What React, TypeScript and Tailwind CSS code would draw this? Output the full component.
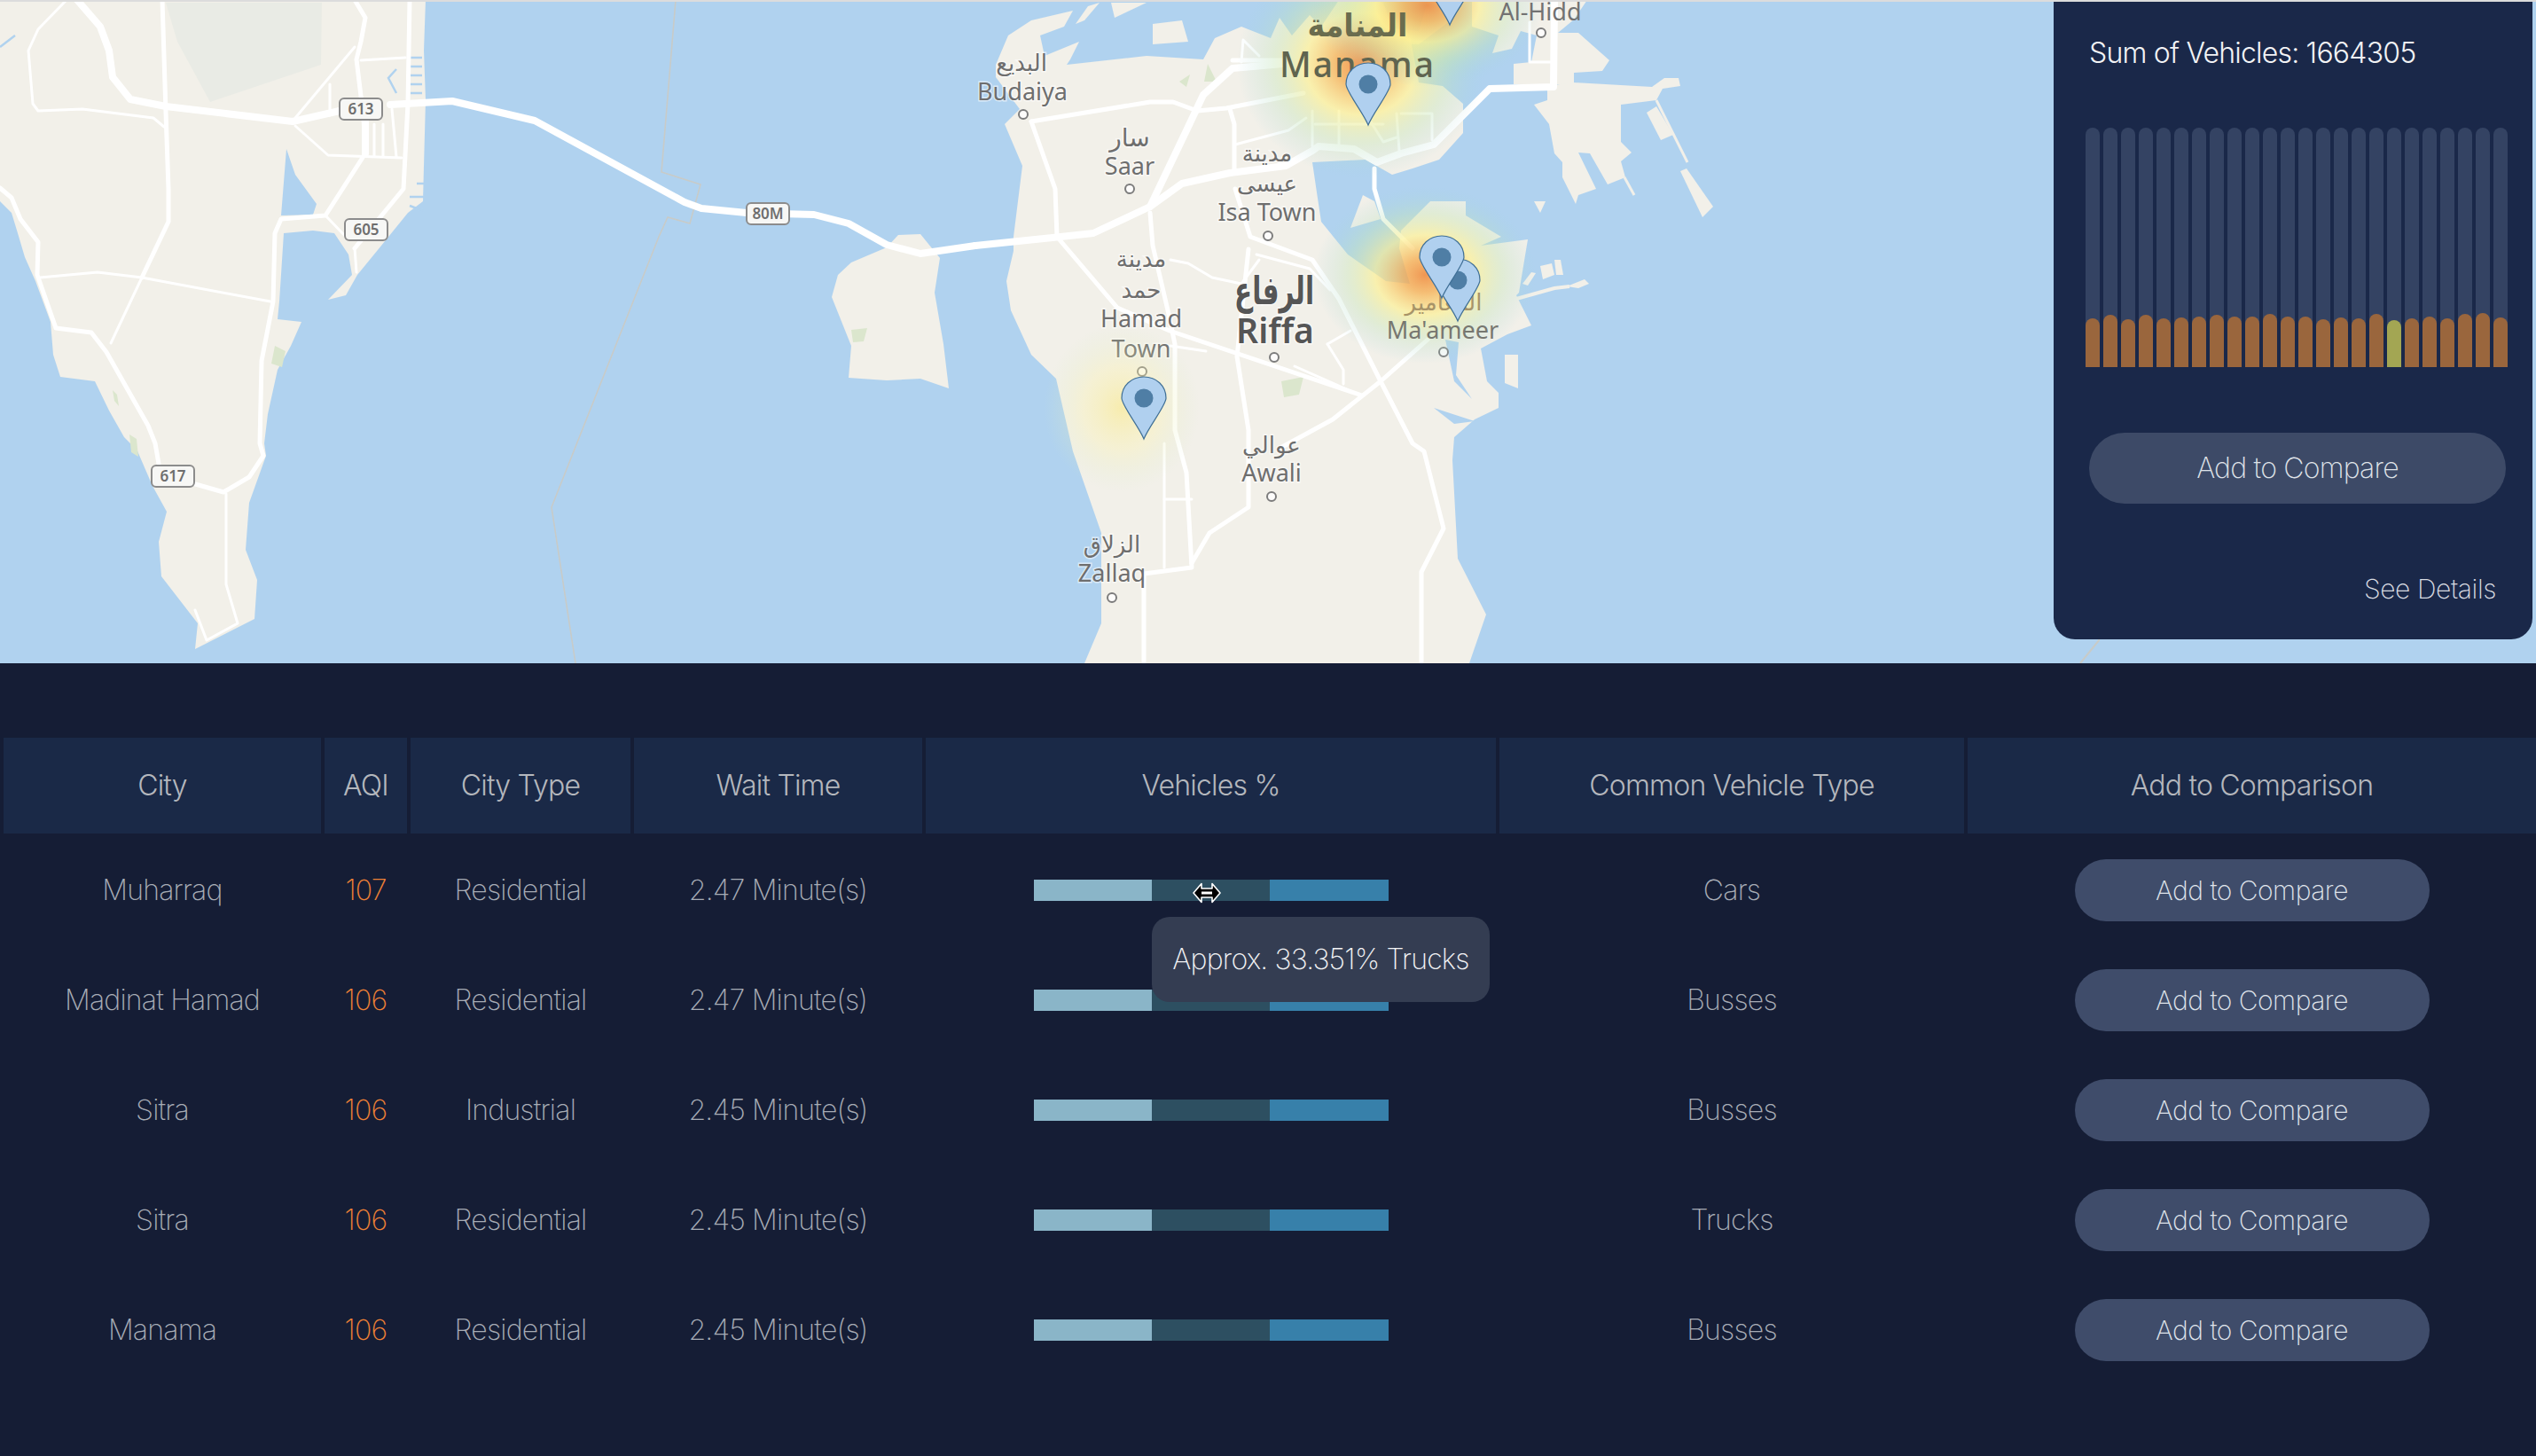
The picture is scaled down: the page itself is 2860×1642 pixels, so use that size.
import React from "react";

const sans = "font-['Inter','Liberation_Sans',sans-serif]";

const roadsThick: string[] = [
  "1100,277 1187,268 1233,263 1297,233 1333,207 1387,195 1450,187 1480,170 1487,165 1527,168 1553,183 1580,173 1617,163 1680,100 1752,98 1753,0",
  "440,118 510,114 603,136 772,228 791,235 842,240 918,242 957,252 1000,276 1038,286 1100,277",
  "1297,233 1340,143 1357,107 1390,77 1447,72",
  "87,0 113,30 123,57 127,87 147,112 187,120 330,137 383,125",
  "412,133 412,173",
];
const roadsMid: string[] = [
  "183,0 187,127 190,213 190,250 160,313",
  "400,0 412,20 407,47 402,67 410,133 412,173 367,243 317,247 310,263 308,340 295,407 293,500 297,514 281,538 252,555 217,545",
  "462,0 460,117 455,213 400,280",
  "0,212 13,223 23,247 43,273 42,310 63,370 103,375 120,397 167,480 175,500 179,523",
  "1163,137 1297,115 1323,115 1350,125 1383,122 1470,105",
  "1163,137 1190,213 1192,267 1260,347 1319,373 1536,446",
  "1297,240 1300,277 1317,350 1325,388 1325,485 1338,533 1344,640 1290,647 1290,746",
  "1393,213 1410,267 1480,293 1510,337 1557,430 1593,500 1606,509 1628,596 1603,645 1603,746",
  "1550,190 1550,213 1560,247 1593,280",
  "1408,281 1395,402 1408,485 1408,572 1364,601 1344,635",
  "1610,383 1557,430 1503,473 1446,504",
  "1387,123 1392,140 1392,195",
  "1390,68 1447,68",
];
const roadsThin: string[] = [
  "75,0 43,33 32,57 37,117 43,125 93,123 173,133 185,143",
  "45,313 110,307 160,313 305,340",
  "160,313 125,387",
  "333,142 370,175 453,178",
  "333,133 400,53",
  "407,68 457,65",
  "372,95 372,130",
  "442,123 447,177",
  "422,140 422,176",
  "432,140 432,176",
  "367,243 390,267",
  "400,280 402,307",
  "255,557 255,659 268,703 233,722 220,688",
  "1400,70 1402,45 1420,63",
  "1393,163 1453,147 1473,133",
  "1320,293 1340,297 1367,313 1400,320 1420,293",
  "1417,287 1477,303 1500,327",
  "1460,413 1532,445",
  "1497,388 1523,373",
  "1497,388 1515,417 1515,433",
  "1320,390 1360,396",
  "1313,563 1344,563",
  "1313,500 1313,640",
  "1480,125 1480,165",
  "1510,125 1510,168",
  "1483,140 1560,140",
  "1535,120 1560,160 1575,155",
  "1580,128 1615,128 1615,158",
  "1575,128 1578,170",
  "1725,25 1725,70 1750,70",
];

type Lbl = { t: string; x: number; y: number; s: number; w?: number; c?: string; len?: number; ls?: number };
const labels: Lbl[] = [
  { t: "البديع", x: 1152, y: 80, s: 26 },
  { t: "Budaiya", x: 1153, y: 113, s: 27 },
  { t: "سار", x: 1274, y: 165, s: 28 },
  { t: "Saar", x: 1274, y: 197, s: 27 },
  { t: "مدينة", x: 1429, y: 182, s: 26 },
  { t: "عيسى", x: 1429, y: 216, s: 26 },
  { t: "Isa Town", x: 1429, y: 249, s: 27 },
  { t: "مدينة", x: 1287, y: 301, s: 26 },
  { t: "حمد", x: 1287, y: 336, s: 26 },
  { t: "Hamad", x: 1287, y: 369, s: 27 },
  { t: "Town", x: 1287, y: 403, s: 27 },
  { t: "الرفاع", x: 1437, y: 343, s: 44, w: 700, c: "#555555", len: 90 },
  { t: "Riffa", x: 1438, y: 387, s: 39, w: 600, c: "#555555" },
  { t: "عوالي", x: 1434, y: 511, s: 26 },
  { t: "Awali", x: 1434, y: 543, s: 27 },
  { t: "الزلاق", x: 1254, y: 623, s: 26 },
  { t: "Zallaq", x: 1254, y: 656, s: 27 },
];
const hotLabels: Lbl[] = [
  { t: "Al-Hidd", x: 1737, y: 23, s: 27, c: "#727272" },
  { t: "المعامير", x: 1628, y: 350, s: 26, c: "#a89468" },
  { t: "Ma'ameer", x: 1627, y: 382, s: 27, c: "#777770" },
  { t: "المنامة", x: 1531, y: 41, s: 36, w: 700, c: "#6a6c4e", len: 113 },
  { t: "Manama", x: 1531, y: 87, s: 39, w: 500, c: "#5f644f", ls: 2 },
];
const dots: [number, number][] = [
  [1738, 37], [1154, 129], [1274, 213], [1430, 266], [1288, 419], [1437, 403], [1628, 397], [1434, 560], [1254, 674],
];
const badges: [string, number, number][] = [
  ["613", 407, 123], ["605", 413, 259], ["617", 195, 537], ["80M", 866, 241],
];
const pins: [number, number][] = [
  [1610, -42], [1518, 71], [1619, 292], [1601, 266], [1265, 425],
];

function MapCanvas() {
  return (
    <svg viewBox="0 2 2860 746" className="block h-full w-full" style={{ fontFamily: "'Noto Sans','DejaVu Sans',sans-serif" }}>
      <defs>
        <radialGradient id="heatA">
          <stop offset="0" stopColor="#ef8a3e" stopOpacity="0.88" />
          <stop offset="0.2" stopColor="#f6ae50" stopOpacity="0.76" />
          <stop offset="0.45" stopColor="#fdf08a" stopOpacity="0.62" />
          <stop offset="0.7" stopColor="#c4e5b4" stopOpacity="0.38" />
          <stop offset="1" stopColor="#a0d4e0" stopOpacity="0" />
        </radialGradient>
        <radialGradient id="heatB">
          <stop offset="0" stopColor="#fbe97e" stopOpacity="0.55" />
          <stop offset="0.5" stopColor="#fbf2ac" stopOpacity="0.34" />
          <stop offset="1" stopColor="#d4ebc4" stopOpacity="0" />
        </radialGradient>
        <filter id="soft" x="0" y="0" width="100%" height="100%">
          <feGaussianBlur stdDeviation="0.7" />
        </filter>
      </defs>
      <rect y="2" width="2860" height="746" fill="#b0d2ef" />
      <g filter="url(#soft)">
        <g fill="#f2f0e9">
          <polygon points="0,0 480,0 478,57 480,113 478,187 477,227 460,240 430,277 403,310 390,333 370,338 397,310 393,287 377,263 353,260 320,263 315,340 313,360 340,363 328,390 313,417 302,467 298,500 300,514 281,567 277,620 290,654 287,698 220,732 223,703 182,650 179,611 188,577 172,548 153,504 147,500 140,493 123,463 107,430 68,425 60,400 57,363 40,317 28,290 20,263 13,240 0,227" />
          <polygon points="960,296 1000,279 1013,265 1038,264 1060,291 1054,330 1064,388 1070,438 1038,427 1000,429 957,426 960,390 938,335 945,310" />
          <polygon points="1123,73 1137,40 1163,23 1210,12 1200,30 1173,40 1178,63 1217,47 1207,67 1203,73 1293,63 1357,67 1370,43 1400,30 1433,43 1443,20 1457,40 1477,17 1490,30 1510,0 1555,0 1590,40 1600,93 1627,97 1650,117 1650,150 1623,180 1593,190 1570,197 1540,180 1480,183 1485,217 1490,250 1520,287 1563,317 1590,320 1578,280 1580,260 1613,227 1653,227 1653,243 1693,267 1670,277 1723,270 1713,330 1710,333 1727,367 1700,377 1670,393 1677,430 1690,443 1690,460 1663,473 1640,493 1638,519 1644,630 1676,693 1657,748 1223,748 1242,703 1242,601 1210,509 1191,427 1163,400 1140,350 1135,317 1143,283 1143,267 1153,187 1133,140 1150,123 1123,87" />
          <polygon points="1660,0 1790,0 1775,22 1757,37 1757,95 1707,95 1707,72 1727,70 1733,40 1715,35 1705,55 1683,60 1690,40 1660,30" />
          <polygon points="1757,37 1780,37 1815,68 1807,80 1775,82 1775,95 1755,95" />
          <polygon points="1773,93 1863,98 1877,88 1893,88 1895,97 1875,100 1868,113 1828,118 1828,160 1840,172 1828,182 1833,200 1813,208 1793,173 1780,172 1800,213 1780,220 1777,230 1772,220 1762,200 1762,183 1753,173 1747,140 1730,118 1745,113 1745,97" />
          <polygon points="1857,127 1868,120 1887,152 1873,158" />
          <polygon points="1895,193 1902,190 1932,233 1920,245" />
          <polygon points="1730,227 1743,227 1737,240" />
          <polygon points="1537,220 1523,257 1557,247 1550,227" />
          <polygon points="1697,400 1712,400 1712,438 1697,432" />
          <polygon points="1717,320 1727,307 1732,308 1723,322" />
          <polygon points="1737,300 1750,297 1753,310 1740,315" />
          <polygon points="1753,293 1760,293 1763,310 1755,310" />
          <polygon points="1767,323 1787,315 1792,320 1780,325" />
          <polygon points="1213,27 1227,7 1240,3 1223,23" />
          <polygon points="1253,3 1293,3 1257,20" />
          <polygon points="1300,27 1333,23 1340,47 1300,50" />
          <polygon points="1520,0 1600,0 1640,0 1640,20 1600,50 1560,50" opacity="0.7" />
        </g>
        <polyline points="1868,113 1903,183" fill="none" stroke="#f2f0e9" strokeWidth="3" />
        <polyline points="1832,200 1843,220" fill="none" stroke="#f2f0e9" strokeWidth="3" />
        <polyline points="1710,337 1753,325 1770,323" fill="none" stroke="#f2f0e9" strokeWidth="4" />
        <polygon points="187,3 363,3 362,73 237,115 200,47" fill="#e9ebe5" />
        <g fill="#b0d2ef">
          <polygon points="323,168 317,243 353,242 357,230 333,197" />
          <polygon points="1630,383 1645,386 1642,423 1660,450 1640,430" />
          <polygon points="1617,460 1663,475 1640,478" />
          <polygon points="1560,2 1610,2 1600,35 1570,32" opacity="0.6" />
        </g>
        <g stroke="#b0d2ef" strokeWidth="2.5" fill="none">
          <polyline points="0,53 17,40" />
          <polyline points="447,78 438,88 447,105" />
          <polyline points="463,65 476,65" />
          <polyline points="463,75 476,75" />
          <polyline points="463,85 476,85" />
          <polyline points="463,95 476,95" />
          <polyline points="463,105 476,105" />
          <polyline points="470,207 478,207" />
          <polyline points="462,222 478,222" />
          <polyline points="462,232 478,238" />
        </g>
        <g fill="#dbe6cd">
          <polygon points="960,372 978,370 974,385 962,386" />
          <polygon points="1445,430 1470,425 1465,445 1448,448" />
          <polygon points="310,390 322,396 318,414 306,410" />
          <polygon points="127,440 132,445 134,458 129,452" />
          <polygon points="146,490 154,495 156,515 148,510" />
          <polygon points="1330,92 1342,84 1338,98" />
          <polygon points="1362,72 1372,92 1358,92" />
        </g>
        <polyline
          points="762,0 746,194 790,208 778,252 753,245 743,267 622,572 649,748"
          fill="none"
          stroke="#c8cbc8"
          strokeWidth="1.6"
        />
        <polyline points="2368,721 2346,748" fill="none" stroke="#c8cbc8" strokeWidth="2" />
        <g fill="none" stroke="#ffffff" strokeLinejoin="round" strokeLinecap="round">
          {roadsThin.map((p) => (
            <polyline key={p} points={p} strokeWidth="3" />
          ))}
          {roadsMid.map((p) => (
            <polyline key={p} points={p} strokeWidth="5" />
          ))}
          {roadsThick.map((p) => (
            <polyline key={p} points={p} strokeWidth="8" />
          ))}
        </g>
      </g>
      {badges.map(([t, x, y]) => (
        <g key={t}>
          <rect x={x - 24} y={y - 12} width="48" height="24" rx="5" fill="#f7f7f5" stroke="#8c8c8c" strokeWidth="2" />
          <text x={x} y={y + 6} textAnchor="middle" fontSize="17" fontWeight="600" fill="#6e6e6e">
            {t}
          </text>
        </g>
      ))}
      {dots.map(([x, y]) => (
        <circle key={`${x}-${y}`} cx={x} cy={y} r="5" fill="#fff" fillOpacity="0.8" stroke="#7c7c7c" strokeWidth="2" />
      ))}
      {labels.map((l) => (
        <text
          key={`${l.t}-${l.x}-${l.y}`}
          x={l.x}
          y={l.y}
          textAnchor="middle"
          fontSize={l.s}
          fontWeight={l.w ?? 400}
          fill={l.c ?? "#6e6e6e"}
          stroke="#ffffff"
          strokeOpacity="0.55"
          strokeWidth="3"
          paintOrder="stroke"
          textLength={l.len}
          lengthAdjust={l.len ? "spacingAndGlyphs" : undefined}
        >
          {l.t}
        </text>
      ))}
      <ellipse cx="1535" cy="72" rx="140" ry="128" fill="url(#heatA)" />
      <ellipse cx="1610" cy="6" rx="130" ry="92" fill="url(#heatA)" />
      <ellipse cx="1607" cy="310" rx="125" ry="100" fill="url(#heatA)" />
      <ellipse cx="1265" cy="460" rx="88" ry="95" fill="url(#heatB)" />
      {hotLabels.map((l) => (
        <text
          key={l.t}
          x={l.x}
          y={l.y}
          textAnchor="middle"
          fontSize={l.s}
          fontWeight={l.w ?? 400}
          fill={l.c}
          letterSpacing={l.ls}
          textLength={l.len}
          lengthAdjust={l.len ? "spacingAndGlyphs" : undefined}
        >
          {l.t}
        </text>
      ))}
      {pins.map(([x, y]) => (
        <g key={`${x}-${y}`} transform={`translate(${x} ${y})`}>
          <path
            d="M25 70C20 57 0 32 0 24 0 10 11 0 25 0S50 10 50 24C50 32 30 57 25 70Z"
            fill="#b0d0ef"
            stroke="#3f6f96"
            strokeWidth="1.2"
          />
          <circle cx="25" cy="24" r="10.5" fill="#4f7ea5" />
        </g>
      ))}
    </svg>
  );
}

const barHeights = [55, 59, 54, 59, 55, 56, 57, 59, 57, 57, 60, 57, 57, 54, 56, 55, 60, 53, 55, 57, 55, 60, 61, 56];

function VehiclesPanel() {
  return (
    <div className={`absolute left-[2316px] top-0 flex h-[719px] w-[540px] flex-col rounded-b-[24px] bg-[#1a2849] ${sans}`}>
      <div className="ml-[40px] mt-[39px] text-[32px] font-light leading-[38px] tracking-[-0.8px] text-[#f2f3f5]">Sum of Vehicles: 1664305</div>
      <div className="ml-[36px] mt-[65px] flex h-[270px] gap-[4.5px]">
        {barHeights.map((h, i) => (
          <div key={i} className="relative h-full w-[15.5px] rounded-t-full bg-[#344363]">
            <div
              className={`absolute bottom-0 left-0 w-full rounded-t-full ${i === 17 ? "bg-[#a3a653]" : "bg-[#9a663d]"}`}
              style={{ height: h }}
            />
          </div>
        ))}
      </div>
      <button className="ml-[40px] mt-[74px] h-[80px] w-[470px] rounded-[40px] bg-[#3d4a67] text-[32px] font-extralight tracking-[-0.8px] text-[#dfe2e8]">
        Add to Compare
      </button>
      <div className="mr-[41px] mt-[77px] self-end text-[30px] font-extralight leading-[38px] tracking-[-0.4px] text-[#d9dce2]">See Details</div>
    </div>
  );
}

const gridCols = "grid grid-cols-[358px_93px_248px_325px_643px_524px_641px] gap-x-[4px] pl-[4px]";
const headers = ["City", "AQI", "City Type", "Wait Time", "Vehicles %", "Common Vehicle Type", "Add to Comparison"];
const rows = [
  ["Muharraq", "107", "Residential", "2.47 Minute(s)", "Cars"],
  ["Madinat Hamad", "106", "Residential", "2.47 Minute(s)", "Busses"],
  ["Sitra", "106", "Industrial", "2.45 Minute(s)", "Busses"],
  ["Sitra", "106", "Residential", "2.45 Minute(s)", "Trucks"],
  ["Manama", "106", "Residential", "2.45 Minute(s)", "Busses"],
];

function Cursor() {
  return (
    <svg viewBox="0 0 32 24" className="absolute left-[1345px] top-[247px] h-[24px] w-[32px]">
      <path
        d="M1 12 10 1.5V7H22V1.5L31 12 22 22.5V17H10V22.5Z"
        fill="#000"
        stroke="#fff"
        strokeWidth="1.6"
        strokeLinejoin="round"
      />
      <rect x="10" y="10.5" width="12" height="3" fill="#fff" />
    </svg>
  );
}

function DataTable() {
  return (
    <div className={`relative pt-[84px] ${sans}`}>
      <div className={gridCols}>
        {headers.map((h) => (
          <div key={h} className="flex h-[108px] items-center justify-center bg-[#1a2947] text-[32px] font-light tracking-[-0.8px] text-[#b4b7bd]">
            {h}
          </div>
        ))}
      </div>
      <div className="pt-[2px]">
        {rows.map((r, i) => (
          <div key={i} className={`${gridCols} h-[124px] items-center text-center text-[32px] font-extralight tracking-[-0.8px] text-[#a7acb5]`}>
            <div>{r[0]}</div>
            <div className="text-[#ee8136]">{r[1]}</div>
            <div>{r[2]}</div>
            <div>{r[3]}</div>
            <div className="flex justify-center">
              <div className="flex h-[24px] w-[400px]">
                <div className="w-[133px] bg-[#8ab5c8]" />
                <div className="w-[133px] bg-[#2d4f61]" />
                <div className="w-[134px] bg-[#3780aa]" />
              </div>
            </div>
            <div>{r[4]}</div>
            <div className="flex justify-center">
              <button className="h-[70px] w-[400px] rounded-[35px] bg-[#3f4c6a] text-[30px] font-extralight tracking-[-0.5px] text-[#dfe3ea]">
                Add to Compare
              </button>
            </div>
          </div>
        ))}
      </div>
      <div className="absolute left-[1299px] top-[286px] flex h-[96px] w-[381px] items-center justify-center rounded-[20px] bg-[#343d52] text-[32px] font-extralight tracking-[-0.8px] text-[#f2f3f5]">
        Approx. 33.351% Trucks
      </div>
      <Cursor />
    </div>
  );
}

export default function App() {
  return (
    <div className="min-h-screen w-full overflow-hidden bg-[#151d35]">
      <section className="relative h-[748px] border-t-2 border-[#dcdcdc]">
        <MapCanvas />
        <VehiclesPanel />
      </section>
      <DataTable />
    </div>
  );
}
